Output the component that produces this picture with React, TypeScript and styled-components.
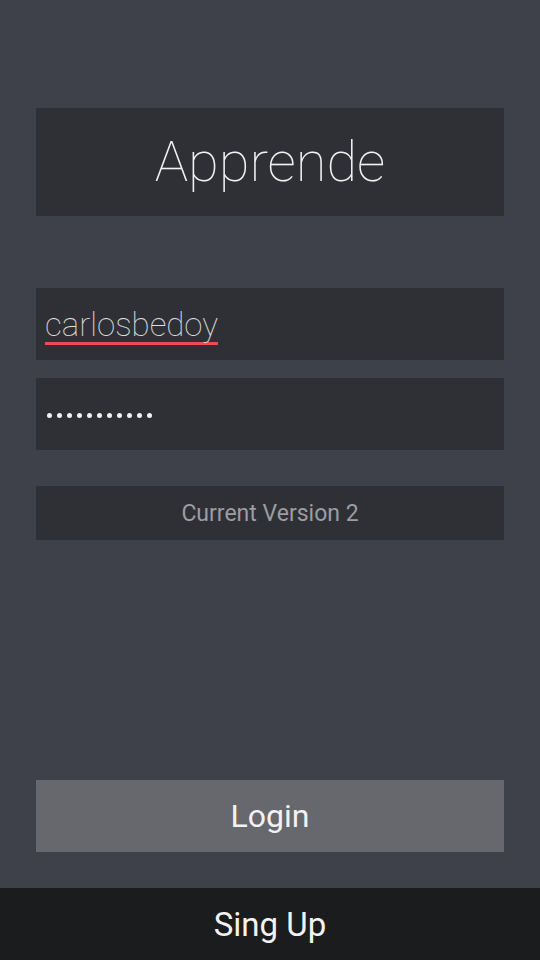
import React from "react";
import styled, { createGlobalStyle } from "styled-components";

const Global = createGlobalStyle`
  html, body { margin: 0; padding: 0; background: #3e4149; }
  body { font-family: Roboto, "Noto Sans", "Liberation Sans", sans-serif; }
  * { box-sizing: border-box; }
`;

const Screen = styled.div`
  width: 540px;
  height: 960px;
  background: #3e4149;
  display: flex;
  flex-direction: column;
`;

const Content = styled.main`
  flex: 1;
  display: flex;
  flex-direction: column;
  padding: 108px 36px 36px;
`;

const Panel = styled.div<{ $h: number; $mt?: number }>`
  height: ${(p) => p.$h}px;
  margin-top: ${(p) => p.$mt ?? 0}px;
  background: #2e3035;
  display: flex;
  align-items: center;
`;

const Title = styled.h1`
  margin: 0;
  width: 100%;
  text-align: center;
  font-weight: 100;
  font-size: 56px;
  color: #f2f2f2;
  letter-spacing: 0;
`;

const Field = styled(Panel)`
  padding: 0 9px;
`;

const UserText = styled.span`
  display: inline-block;
  font-weight: 100;
  font-size: 33px;
  color: #e0e0e0;
  line-height: 34px;
  height: 37px;
  border-bottom: 3px solid #f04a4e;
  margin-top: 4px;
`;

const Dots = styled.div`
  display: flex;
  gap: 5px;
  padding-left: 2px;
  margin-top: 2px;
`;

const Dot = styled.span`
  width: 5px;
  height: 5px;
  border-radius: 50%;
  background: #f2f2f2;
`;

const Version = styled.div`
  width: 100%;
  text-align: center;
  font-size: 23px;
  color: #9c9da0;
  font-weight: 400;
`;

const Spacer = styled.div`
  flex: 1;
`;

const LoginButton = styled.button`
  height: 72px;
  border: none;
  background: #66686d;
  color: #f2f2f2;
  font-family: inherit;
  font-size: 32px;
  font-weight: 400;
  padding: 0;
`;

const SignUpBar = styled.footer`
  height: 72px;
  background: #1b1c1e;
  color: #f2f2f2;
  font-size: 33px;
  display: flex;
  align-items: center;
  justify-content: center;
`;

export default function App() {
  return (
    <>
      <Global />
      <Screen>
        <Content>
          <Panel $h={108}>
            <Title>Apprende</Title>
          </Panel>
          <Field $h={72} $mt={72}>
            <UserText>carlosbedoy</UserText>
          </Field>
          <Field $h={72} $mt={18}>
            <Dots>
              {Array.from({ length: 11 }).map((_, i) => (
                <Dot key={i} />
              ))}
            </Dots>
          </Field>
          <Panel $h={54} $mt={36}>
            <Version>Current Version 2</Version>
          </Panel>
          <Spacer />
          <LoginButton>Login</LoginButton>
        </Content>
        <SignUpBar>Sing Up</SignUpBar>
      </Screen>
    </>
  );
}
